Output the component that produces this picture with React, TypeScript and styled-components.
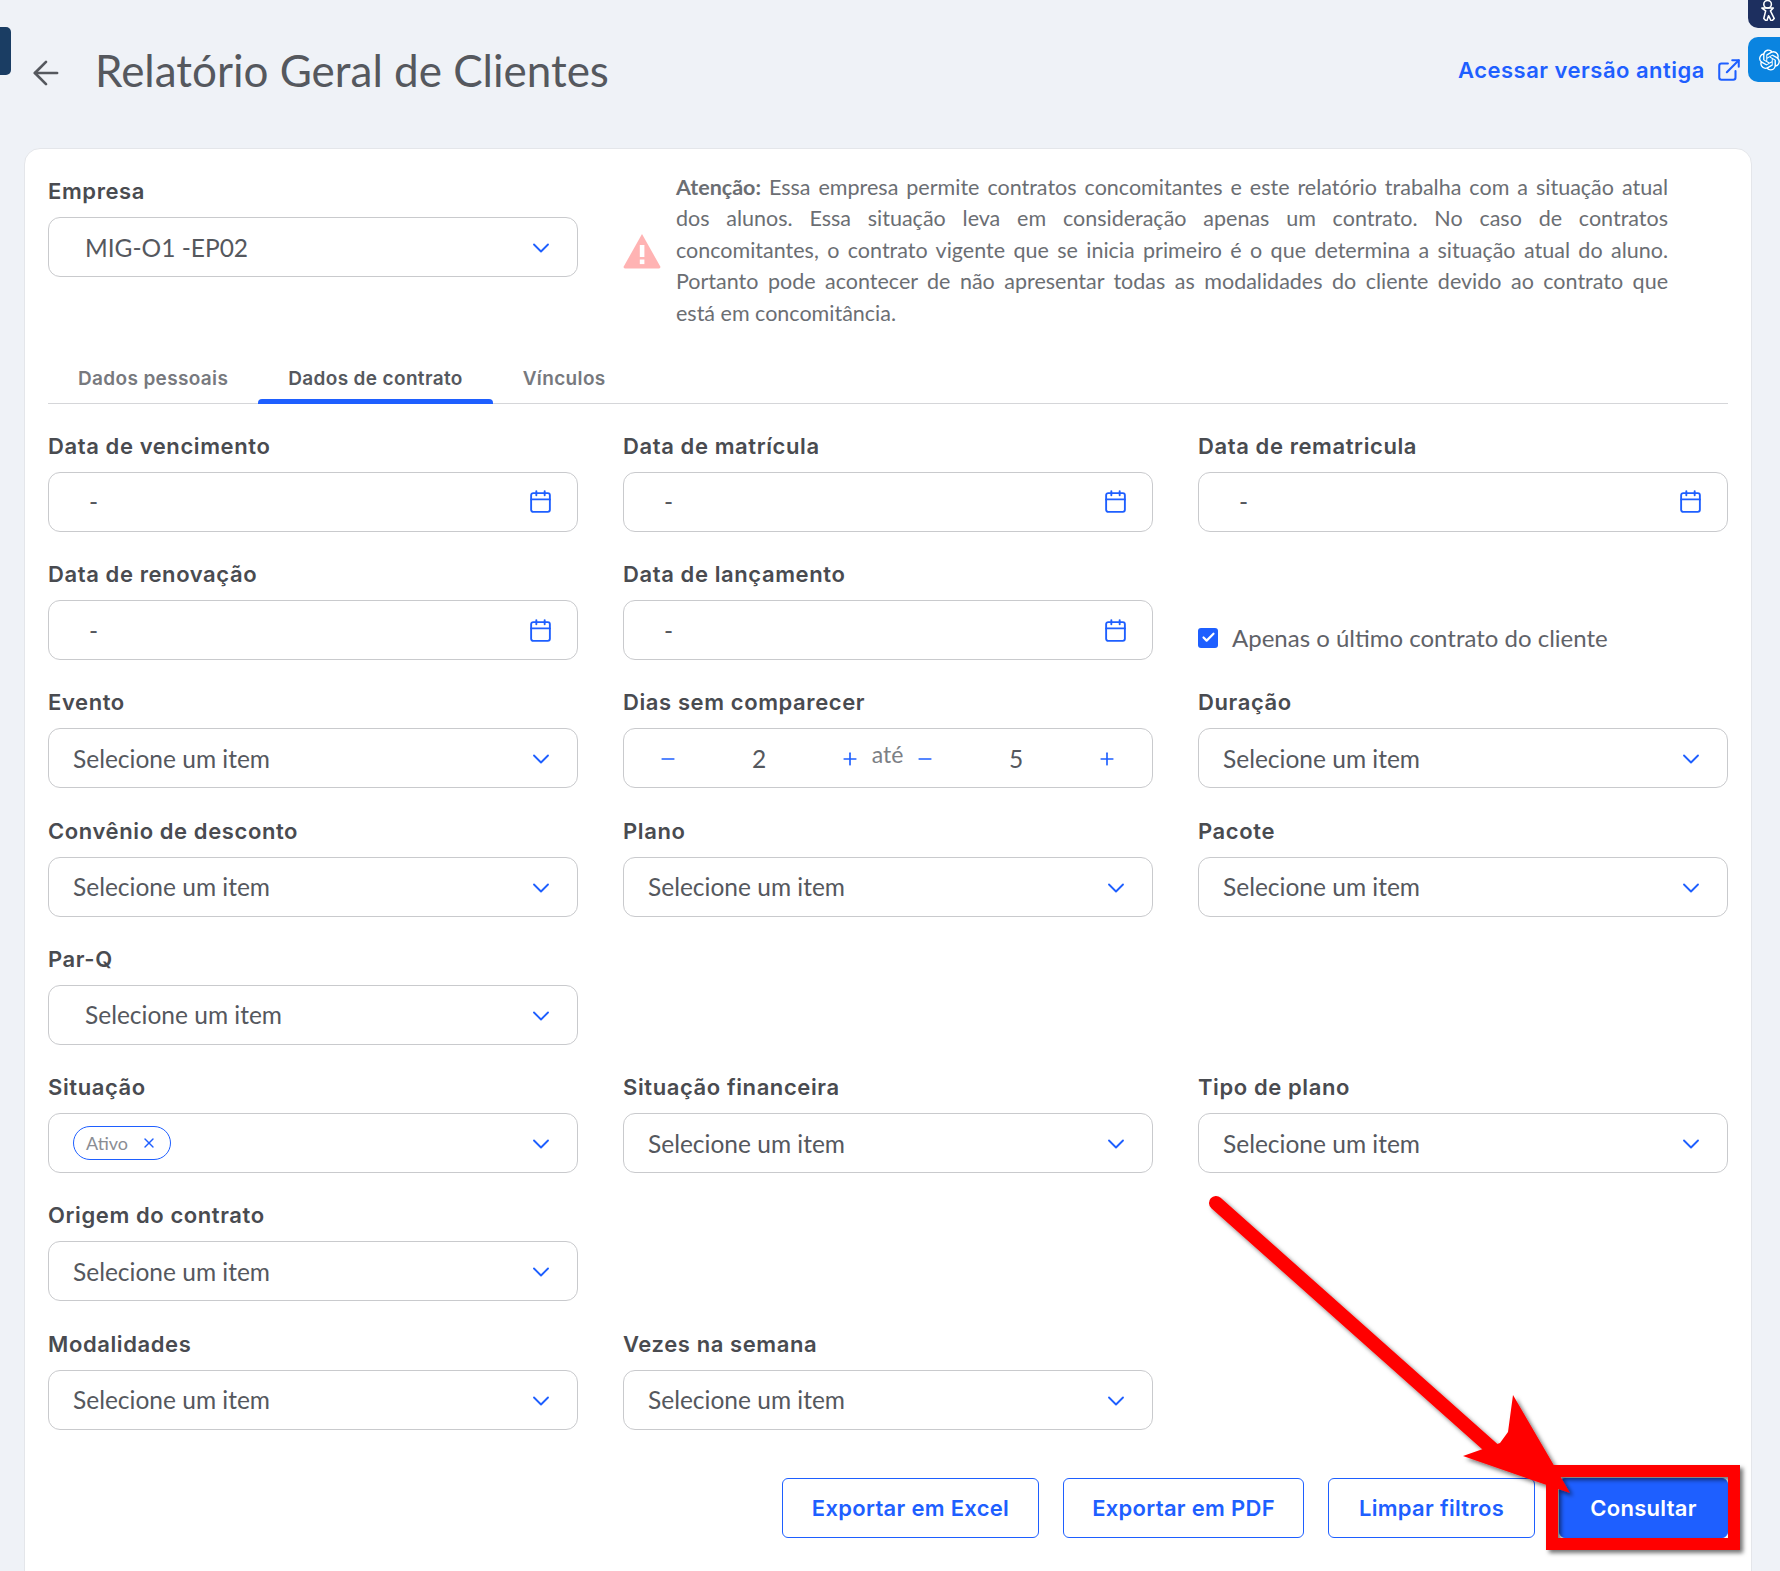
import * as React from 'react';
import styled, { createGlobalStyle } from 'styled-components';
import { ArrowLeft, Calendar, Check, ChevronDown, ExternalLink, Minus, Plus, X } from 'lucide-react';
import { SiOpenai } from 'react-icons/si';

const BLUE = '#1e5fff';
const BODY_FONT = '"Lato", "Noto Sans", sans-serif';
const LABEL_FONT = '"Inter", "Noto Sans", sans-serif';

const GlobalStyle = createGlobalStyle`
  html, body {
    margin: 0;
    padding: 0;
    background: #eff2f7;
  }
  * {
    box-sizing: border-box;
  }
`;

const Page = styled.div`
  position: relative;
  width: 1780px;
  height: 1571px;
  overflow: hidden;
  padding: 0 28px 0 24px;
  font-family: ${BODY_FONT};
  color: #55585e;
`;

const Header = styled.header`
  height: 148px;
  display: flex;
  align-items: center;
  padding: 0 0 8px 3px;
`;

const BackButton = styled.span`
  display: flex;
  color: #55585e;
  margin-right: 30px;
  margin-top: 6px;
`;

const Title = styled.h1`
  margin: 0;
  font-size: 44px;
  font-weight: 400;
  color: #55585e;
  flex: 1;
`;

const OldVersion = styled.a`
  display: flex;
  align-items: center;
  gap: 11px;
  font-family: ${LABEL_FONT};
  font-size: 22px;
  font-weight: 600;
  letter-spacing: 0.5px;
  color: ${BLUE};
  margin-right: 10px;
`;

const SideTab = styled.div<{ $top: number; $height: number; $bg: string; $radius: string }>`
  position: absolute;
  top: ${p => p.$top}px;
  right: 0;
  width: 32px;
  height: ${p => p.$height}px;
  background: ${p => p.$bg};
  border-radius: ${p => p.$radius};
  color: #fff;
  overflow: hidden;
  display: flex;
  align-items: center;
  padding-left: 11px;
`;

const LeftTab = styled.div`
  position: absolute;
  left: 0;
  top: 27px;
  width: 11px;
  height: 48px;
  background: #1a3d63;
  border-radius: 0 5px 5px 0;
`;

const Card = styled.main`
  background: #fff;
  border: 1px solid #e4e6ea;
  border-radius: 16px;
  padding: 23px 23px 80px;
`;

const TopRow = styled.section`
  display: grid;
  grid-template-columns: 530px 1fr;
  column-gap: 45px;
  height: 184px;
  padding-top: 7px;
`;

const Label = styled.label`
  display: block;
  height: 26px;
  line-height: 24px;
  margin-bottom: 12px;
  font-family: ${LABEL_FONT};
  font-size: 22px;
  font-weight: 600;
  letter-spacing: 0.6px;
  color: #494b50;
`;

const Notice = styled.div`
  display: flex;
  align-items: center;
  gap: 15px;
  padding-right: 60px;
  margin-top: -14px;
  height: 171px;
`;

const NoticeIcon = styled.svg`
  flex: none;
  width: 38px;
  height: 36px;
`;

const NoticeText = styled.p`
  margin: 0;
  font-size: 21.5px;
  line-height: 31.4px;
  text-align: justify;
  color: #6b6e73;
  b {
    font-weight: 700;
  }
`;

const Tabs = styled.nav`
  display: flex;
  height: 48px;
  border-bottom: 1px solid #d5d6d9;
`;

const Tab = styled.span<{ $active?: boolean }>`
  position: relative;
  padding: 0 30px;
  line-height: 46px;
  font-family: ${LABEL_FONT};
  font-size: 19px;
  font-weight: 600;
  letter-spacing: 0.35px;
  color: ${p => (p.$active ? '#55585e' : '#77797e')};
  &::after {
    content: '';
    display: ${p => (p.$active ? 'block' : 'none')};
    position: absolute;
    left: 0;
    right: 0;
    bottom: -1px;
    height: 5px;
    background: ${BLUE};
    border-radius: 4px 4px 0 0;
  }
`;

const FieldGrid = styled.section`
  display: grid;
  grid-template-columns: repeat(3, 530px);
  column-gap: 45px;
  row-gap: 30.25px;
  margin-top: 29.8px;
`;

const Box = styled.div`
  height: 60px;
  display: flex;
  align-items: center;
  border: 1px solid #c9cacd;
  border-radius: 12px;
  background: #fff;
  font-size: 24.5px;
  color: #55585e;
`;

const SelectBox = styled(Box)<{ $inset?: boolean }>`
  padding: 0 22px 0 ${p => (p.$inset ? 36 : 24)}px;
  justify-content: space-between;
  svg {
    color: ${BLUE};
    flex: none;
  }
  > svg {
    margin-top: 2px;
  }
`;

const DateBox = styled(Box)`
  padding: 0 24px 0 40px;
  justify-content: space-between;
  svg {
    color: ${BLUE};
  }
`;

const Chip = styled.span`
  display: inline-flex;
  align-items: center;
  justify-content: space-between;
  width: 98px;
  height: 34px;
  padding: 0 13px 0 12px;
  border: 1.5px solid ${BLUE};
  border-radius: 17px;
  font-size: 18px;
  color: #8a8d93;
`;

const StepperBox = styled(Box)`
  padding: 0 27px 0 26px;
`;

const Stepper = styled.div`
  flex: 1;
  display: flex;
  align-items: center;
`;

const StepButton = styled.span`
  flex: none;
  width: 36px;
  display: flex;
  justify-content: center;
  color: ${BLUE};
  margin-top: 2px;
`;

const StepValue = styled.span`
  flex: 1;
  text-align: center;
`;

const Until = styled.span`
  flex: none;
  width: 39px;
  text-align: center;
  font-size: 23px;
  color: #7c7f85;
  margin-top: -9px;
`;

const CheckRow = styled.div`
  display: flex;
  align-items: center;
  gap: 14px;
  height: 60px;
  margin-top: 38px;
  padding-top: 15px;
  font-size: 24px;
  color: #5f6268;
`;

const CheckMark = styled.span`
  flex: none;
  width: 20px;
  height: 20px;
  border-radius: 3px;
  background: ${BLUE};
  color: #fff;
  display: flex;
  align-items: center;
  justify-content: center;
`;

const Actions = styled.footer`
  display: flex;
  justify-content: flex-end;
  gap: 24px;
  margin-top: 48px;
`;

const ActionButton = styled.button<{ $primary?: boolean; $width: number }>`
  width: ${p => p.$width}px;
  height: 60px;
  padding: 0;
  border: 1px solid ${BLUE};
  border-radius: 6px;
  background: ${p => (p.$primary ? BLUE : '#fff')};
  color: ${p => (p.$primary ? '#fff' : BLUE)};
  font-family: ${LABEL_FONT};
  font-size: 22px;
  font-weight: 600;
  letter-spacing: 0.3px;
`;

const Annotation = styled.svg`
  position: absolute;
  left: 0;
  top: 0;
  pointer-events: none;
`;

const Select = ({ value = 'Selecione um item', inset }: { value?: string; inset?: boolean }) => (
  <SelectBox $inset={inset}>
    <span>{value}</span>
    <ChevronDown size={28} strokeWidth={1.6} />
  </SelectBox>
);

const Field = ({ label, children }: { label: string; children: React.ReactNode }) => (
  <div>
    <Label>{label}</Label>
    {children}
  </div>
);

const DateField = ({ label }: { label: string }) => (
  <Field label={label}>
    <DateBox>
      <span>-</span>
      <Calendar size={25} strokeWidth={1.8} />
    </DateBox>
  </Field>
);

const StepperPart = ({ value }: { value: number }) => (
  <Stepper>
    <StepButton>
      <Minus size={20} />
    </StepButton>
    <StepValue>{value}</StepValue>
    <StepButton>
      <Plus size={20} />
    </StepButton>
  </Stepper>
);

const SelectField = ({ label, inset }: { label: string; inset?: boolean }) => (
  <Field label={label}>
    <Select inset={inset} />
  </Field>
);

export default function App() {
  return (
    <Page>
      <GlobalStyle />
      <LeftTab />
      <SideTab $top={-10} $height={38} $bg="#1d2f5f" $radius="0 0 0 10px">
        <svg width="22" height="24" viewBox="0 0 22 24" fill="none" stroke="#fff" strokeWidth="1.6" strokeLinejoin="round">
          <circle cx="9" cy="7" r="4" />
          <path d="M3 11 7 14 5 22 8 25 10 19 13 25 16 22 12 14 15 11 9 11Z" />
        </svg>
      </SideTab>
      <SideTab $top={37} $height={45} $bg="#0a84e0" $radius="10px 0 0 10px">
        <SiOpenai size={26} />
      </SideTab>

      <Header>
        <BackButton>
          <ArrowLeft size={38} strokeWidth={1.7} />
        </BackButton>
        <Title>Relatório Geral de Clientes</Title>
        <OldVersion>
          Acessar versão antiga
          <ExternalLink size={26} strokeWidth={1.9} />
        </OldVersion>
      </Header>

      <Card>
        <TopRow>
          <div>
            <Label>Empresa</Label>
            <Select value="MIG-O1 -EP02" inset />
          </div>
          <Notice>
            <NoticeIcon viewBox="0 0 38 36">
              <path
                d="M19 1 37 33a1.5 1.5 0 0 1-1.3 2.5H2.3A1.5 1.5 0 0 1 1 33Z"
                fill="#ffb3b3"
              />
              <rect x="16.8" y="12" width="4.6" height="12" fill="#fff" />
              <rect x="16.8" y="26.5" width="4.6" height="4.6" fill="#fff" />
            </NoticeIcon>
            <NoticeText>
              <b>Atenção:</b> Essa empresa permite contratos concomitantes e este relatório trabalha com a situação
              atual dos alunos. Essa situação leva em consideração apenas um contrato. No caso de contratos
              concomitantes, o contrato vigente que se inicia primeiro é o que determina a situação atual do aluno.
              Portanto pode acontecer de não apresentar todas as modalidades do cliente devido ao contrato que
              está&nbsp;em concomitância.
            </NoticeText>
          </Notice>
        </TopRow>

        <Tabs>
          <Tab>Dados pessoais</Tab>
          <Tab $active>Dados de contrato</Tab>
          <Tab>Vínculos</Tab>
        </Tabs>

        <FieldGrid>
          <DateField label="Data de vencimento" />
          <DateField label="Data de matrícula" />
          <DateField label="Data de rematricula" />

          <DateField label="Data de renovação" />
          <DateField label="Data de lançamento" />
          <CheckRow>
            <CheckMark>
              <Check size={15} strokeWidth={3.5} />
            </CheckMark>
            Apenas o último contrato do cliente
          </CheckRow>

          <SelectField label="Evento" />
          <Field label="Dias sem comparecer">
            <StepperBox>
              <StepperPart value={2} />
              <Until>até</Until>
              <StepperPart value={5} />
            </StepperBox>
          </Field>
          <SelectField label="Duração" />

          <SelectField label="Convênio de desconto" />
          <SelectField label="Plano" />
          <SelectField label="Pacote" />

          <SelectField label="Par-Q" inset />
          <div />
          <div />

          <Field label="Situação">
            <SelectBox>
              <Chip>
                Ativo
                <X size={16} color={BLUE} />
              </Chip>
              <ChevronDown size={28} strokeWidth={1.6} />
            </SelectBox>
          </Field>
          <SelectField label="Situação financeira" />
          <SelectField label="Tipo de plano" />

          <SelectField label="Origem do contrato" />
          <div />
          <div />

          <SelectField label="Modalidades" />
          <SelectField label="Vezes na semana" />
          <div />
        </FieldGrid>

        <Actions>
          <ActionButton $width={257}>Exportar em Excel</ActionButton>
          <ActionButton $width={241}>Exportar em PDF</ActionButton>
          <ActionButton $width={207}>Limpar filtros</ActionButton>
          <ActionButton $primary $width={169}>
            Consultar
          </ActionButton>
        </Actions>
      </Card>

      <Annotation width="1780" height="1571" viewBox="0 0 1780 1571">
        <defs>
          <filter id="annotation-shadow" x="-10%" y="-10%" width="120%" height="120%">
            <feDropShadow dx="3" dy="3" stdDeviation="2" floodColor="#000" floodOpacity="0.55" />
          </filter>
        </defs>
        <g filter="url(#annotation-shadow)">
          <rect x="1552" y="1471" width="182" height="73" fill="none" stroke="#ff0000" strokeWidth="12" />
          <path d="M1216 1203 1506 1461" stroke="#ff0000" strokeWidth="14" strokeLinecap="round" />
          <path d="M1513 1395 1570 1493 1463 1456 1500 1443 1508 1432Z" fill="#ff0000" />
        </g>
      </Annotation>
    </Page>
  );
}
